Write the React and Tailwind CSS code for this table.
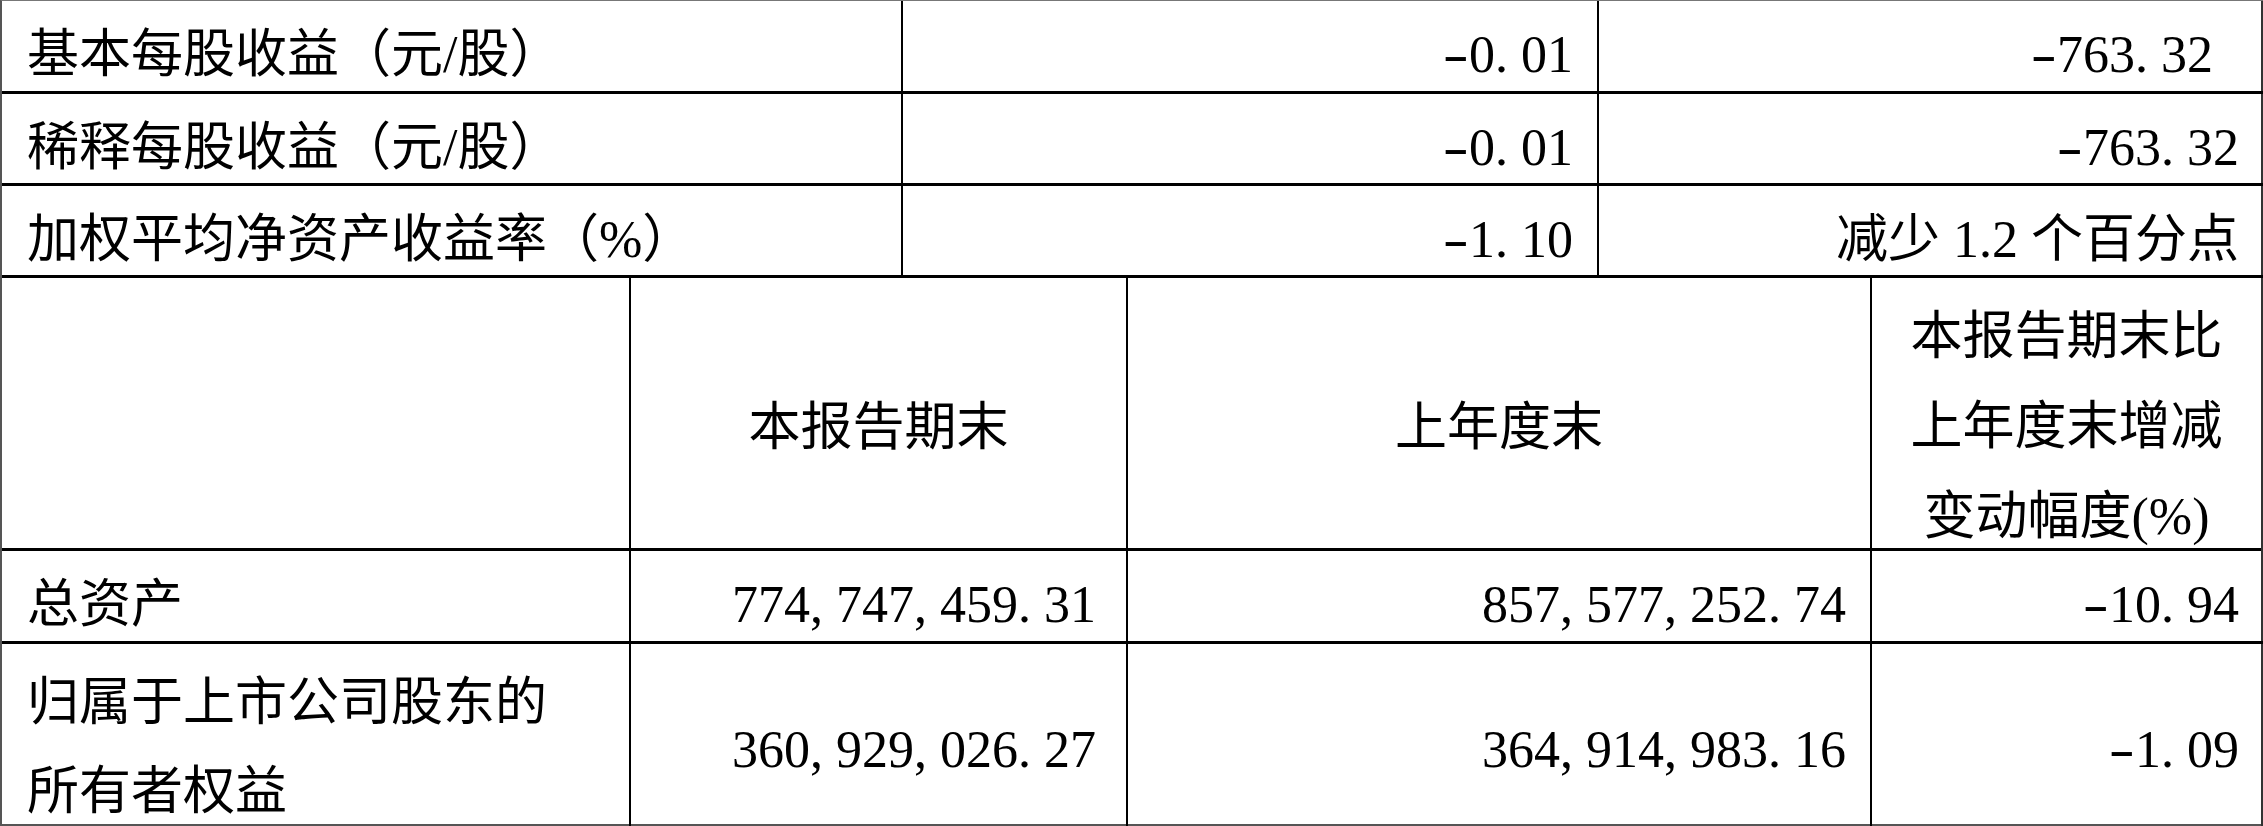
import React from "react";

// half-width punctuation like the source report font (0.5em cells)
function Num({ v }) {
  return v.split("").map((ch, i) => {
    if (ch === "-")
      return (
        <span key={i} className="inline-block w-[0.5em] text-center">
          <span className="inline-block scale-x-150">-</span>
        </span>
      );
    if (".,".includes(ch))
      return (
        <span key={i} className="inline-block w-[0.5em] text-left">
          {ch}
        </span>
      );
    if (ch === " ")
      return <span key={i} className="inline-block w-[0.5em]">{"\u00a0"}</span>;
    return ch;
  });
}

const topRows = [
  { label: "基本每股收益（元/股）", cur: "-0.01", prev: "-763.32 ", h: "h-[93px]" },
  { label: "稀释每股收益（元/股）", cur: "-0.01", prev: "-763.32", h: "h-[92px]" },
  { label: "加权平均净资产收益率（%）", cur: "-1.10", prev: null, h: "h-[92px]" },
];

function App() {
  return (
    <div className="w-[2263px] h-[826px] bg-white text-black text-[52px] font-['Liberation_Serif','Noto_Sans_CJK_SC',serif] border-l-2 border-t border-l-[#555] border-t-[#777] overflow-hidden">
      {/* per-share rows */}
      {topRows.map((r) => (
        <div
          key={r.label}
          className={"grid grid-cols-[901px_696px_664px] border-b-[3px] border-black " + r.h}
        >
          <div className="flex items-center pl-[25px] pt-[18px] border-r-2 border-black leading-[60px] whitespace-nowrap">
            {r.label}
          </div>
          <div className="flex items-center justify-end pr-[24px] pt-[18px] border-r-2 border-black leading-[60px] whitespace-nowrap">
            <Num v={r.cur} />
          </div>
          <div className="flex items-center justify-end pr-[22px] pt-[18px] border-r-2 border-[#333] leading-[60px] whitespace-nowrap">
            {r.prev ? <Num v={r.prev} /> : <span>减少 1.2 个百分点</span>}
          </div>
        </div>
      ))}

      {/* balance header */}
      <div className="grid grid-cols-[629px_497px_744px_391px] h-[273px] border-b-[3px] border-black">
        <div className="border-r-2 border-black" />
        <div className="flex items-center justify-center pt-[16px] border-r-2 border-black leading-[60px]">
          本报告期末
        </div>
        <div className="flex items-center justify-center pt-[16px] border-r-2 border-black leading-[60px]">
          上年度末
        </div>
        <div className="flex flex-col items-center justify-center pt-[14px] border-r-2 border-[#333] leading-[90px] text-center">
          <span>本报告期末比</span>
          <span>上年度末增减</span>
          <span>变动幅度(%)</span>
        </div>
      </div>

      {/* total assets */}
      <div className="grid grid-cols-[629px_497px_744px_391px] h-[93px] border-b-[3px] border-black">
        <div className="flex items-center pl-[25px] pt-[18px] border-r-2 border-black leading-[60px]">
          总资产
        </div>
        <div className="flex items-center justify-end pr-[30px] pt-[18px] border-r-2 border-black leading-[60px]">
          <Num v="774,747,459.31" />
        </div>
        <div className="flex items-center justify-end pr-[24px] pt-[18px] border-r-2 border-black leading-[60px]">
          <Num v="857,577,252.74" />
        </div>
        <div className="flex items-center justify-end pr-[22px] pt-[18px] border-r-2 border-[#333] leading-[60px]">
          <Num v="-10.94" />
        </div>
      </div>

      {/* equity */}
      <div className="grid grid-cols-[629px_497px_744px_391px] h-[182px] border-b-2 border-[#555]">
        <div className="flex flex-col justify-center pl-[25px] pt-[14px] border-r-2 border-black leading-[89px]">
          <span>归属于上市公司股东的</span>
          <span>所有者权益</span>
        </div>
        <div className="flex items-center justify-end pr-[30px] pt-[20px] border-r-2 border-black leading-[60px]">
          <Num v="360,929,026.27" />
        </div>
        <div className="flex items-center justify-end pr-[24px] pt-[20px] border-r-2 border-black leading-[60px]">
          <Num v="364,914,983.16" />
        </div>
        <div className="flex items-center justify-end pr-[22px] pt-[20px] border-r-2 border-[#333] leading-[60px]">
          <Num v="-1.09" />
        </div>
      </div>
    </div>
  );
}

export default App;
